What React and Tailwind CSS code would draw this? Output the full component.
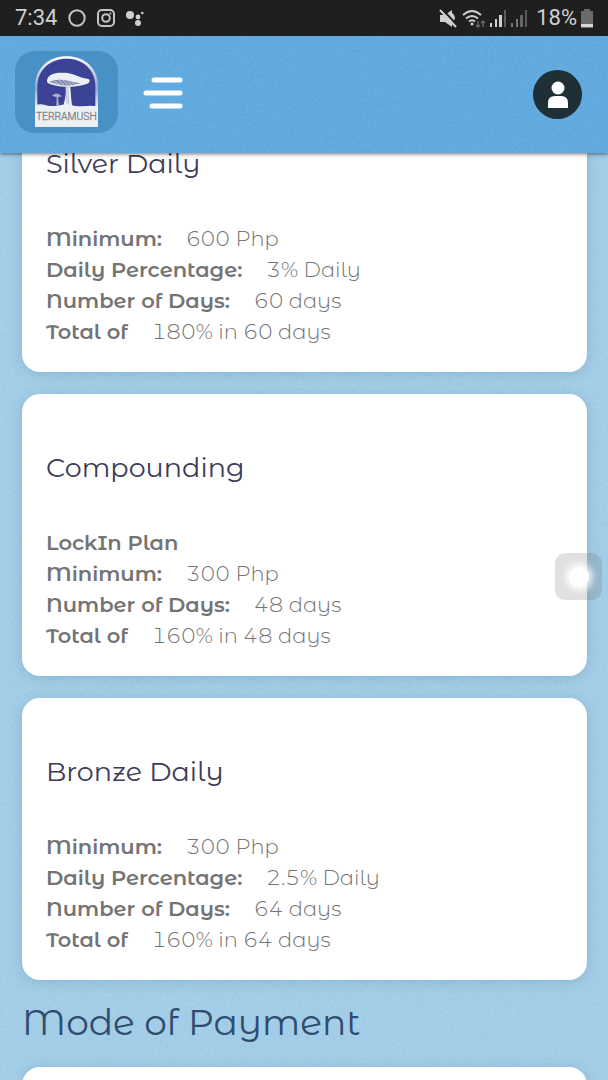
const plans = [
  {
    name: "Silver Daily",
    rows: [
      ["Minimum:", "600 Php"],
      ["Daily Percentage:", "3% Daily"],
      ["Number of Days:", "60 days"],
      ["Total of", "180% in 60 days"],
    ],
  },
  {
    name: "Compounding",
    rows: [
      ["LockIn Plan", ""],
      ["Minimum:", "300 Php"],
      ["Number of Days:", "48 days"],
      ["Total of", "160% in 48 days"],
    ],
  },
  {
    name: "Bronze Daily",
    rows: [
      ["Minimum:", "300 Php"],
      ["Daily Percentage:", "2.5% Daily"],
      ["Number of Days:", "64 days"],
      ["Total of", "160% in 64 days"],
    ],
  },
];

function Grain() {
  return (
    <svg
      className="absolute inset-0 w-full h-full opacity-15 pointer-events-none"
      aria-hidden="true"
    >
      <filter id="grain">
        <feTurbulence type="fractalNoise" baseFrequency="0.35" numOctaves="3" />
        <feColorMatrix type="saturate" values="0" />
      </filter>
      <rect width="100%" height="100%" filter="url(#grain)" />
    </svg>
  );
}

function Signal({ active }) {
  return (
    <svg width="17" height="19" viewBox="0 0 17 19" aria-hidden="true">
      <rect x="0" y="14" width="2" height="4" fill={active > 0 ? "#d0d0d0" : "#777"} />
      <rect x="5" y="10" width="2" height="8" fill={active > 1 ? "#d0d0d0" : "#777"} />
      <rect x="9" y="6" width="3" height="12" fill={active > 2 ? "#d0d0d0" : "#666"} />
      <rect x="14" y="1" width="2" height="17" fill="#5c5c5c" />
    </svg>
  );
}

function StatusBar() {
  return (
    <div className="relative z-20 flex items-center justify-between h-9 shrink-0 bg-[#1f1f1f] px-[15px] font-['Roboto',sans-serif] text-[22px] leading-9 text-[#d0d0d0]">
      <div className="flex items-center gap-[11px]">
        <span>7:34</span>
        <svg width="18" height="18" viewBox="0 0 18 18" fill="none" stroke="#c4c4c4" strokeWidth="2" aria-hidden="true">
          <circle cx="9" cy="9" r="7.7" />
        </svg>
        <svg width="18" height="18" viewBox="0 0 18 18" fill="none" stroke="#c4c4c4" strokeWidth="2" aria-hidden="true">
          <rect x="1" y="1" width="16" height="16" rx="4" />
          <circle cx="9" cy="9" r="3.8" />
          <circle cx="13.4" cy="4.6" r="1" fill="#c4c4c4" stroke="none" />
        </svg>
        <svg width="18" height="18" viewBox="0 0 18 18" fill="#cfcfcf" aria-hidden="true">
          <circle cx="4" cy="6" r="4" />
          <circle cx="12" cy="8" r="2.4" />
          <circle cx="12" cy="14" r="3" />
          <circle cx="16.3" cy="4" r="1.3" />
        </svg>
      </div>
      <div className="flex items-center gap-1">
        <svg width="19" height="19" viewBox="0 0 19 19" aria-hidden="true">
          <path d="M1 6h5l7-5v17l-7-5H1z" fill="#d0d0d0" />
          <path d="M13 4q3 2 3 6l-3 3z" fill="#d0d0d0" />
          <path d="M3 0l16 17" stroke="#1f1f1f" strokeWidth="2" />
          <path d="M1 1l16 17" stroke="#d0d0d0" strokeWidth="2" />
        </svg>
        <svg width="24" height="19" viewBox="0 0 24 19" fill="none" stroke="#d0d0d0" strokeWidth="2" aria-hidden="true">
          <path d="M1 6q9-8 18 0M4 9.500q6-5 12 0M7 12.500q3-2.500 6 0" />
          <circle cx="10" cy="15" r="1.500" fill="#d0d0d0" stroke="none" />
          <path d="M16 12v6m-2-2l2 2 2-2M21 18v-6m-2 2l2-2 2 2" stroke="#666" strokeWidth="1.500" />
        </svg>
        <Signal active={3} />
        <Signal active={0} />
        <span className="pl-1">18%</span>
        <svg width="12" height="19" viewBox="0 0 12 19" aria-hidden="true">
          <path d="M3 0h6v2h3v17H0V2h3z" fill="#6b6b6b" />
          <rect y="15" width="12" height="3" fill="#d8d8d8" />
        </svg>
      </div>
    </div>
  );
}

function Logo() {
  return (
    <svg width="63" height="71" viewBox="0 0 189 212" role="img" aria-label="Terramush">
      <defs>
        <linearGradient id="arch" x1="0" y1="0" x2="0" y2="1">
          <stop offset="0" stopColor="#ffffff" />
          <stop offset="0.45" stopColor="#8fa5cf" />
          <stop offset="0.75" stopColor="#f2f5f8" />
          <stop offset="1" stopColor="#e2e6e8" />
        </linearGradient>
      </defs>
      <path d="M0 212V92C0 32 44 0 95 0s94 32 94 92v120z" fill="url(#arch)" />
      <path d="M7 150V92C7 40 47 8 95 8s86 32 86 84v58z" fill="#3c4296" />
      <path d="M0 147q20-6 38 2 16 2 32-1l16-3q8-30 7-55l13 2q2 34 5 55l24 6q26-8 54-2v61H0z" fill="#edf0f3" />
      <path d="M36 72c4-18 24-24 52-22 30 1 42 15 70 18 13 3 4 16-8 17-28 8-64 9-90 3-10-4-26-5-24-16z" fill="#eef0f5" />
      <path d="M42 77q25-11 58-3 20 5 38 7-38 12-70 4-16-3-26-8z" fill="#858caf" />
      <path d="M47 79l18 6M58 75l18 12M71 72l16 15M84 72l14 15M98 75l12 11M112 79l9 6M43 75l16-5M58 68l25-3" stroke="#e5e7ef" strokeWidth="2" />
      <path d="M98 91l3 55M92 93l4 50" stroke="#9aa1bd" strokeWidth="2" />
      <path d="M51 119q14-14 30 1l-12 3 3 26h-8l1-26z" fill="#a8aecb" />
      <text x="94" y="191" textAnchor="middle" fontFamily="Roboto, sans-serif" fontWeight="300" fontSize="31" fill="#7e8489" stroke="#7e8489">
        TERRAMUSH
      </text>
    </svg>
  );
}

function Header() {
  return (
    <header className="relative z-10 flex items-center justify-between shrink-0 h-[117px] bg-[#5ba9e2] pl-[15px] pr-[26px] shadow-[0_1px_4px_rgba(0,0,0,0.55)]">
      <Grain />
      <div className="relative flex items-center gap-6 pb-[6px]">
        <a
          href="#home"
          className="flex items-center justify-center w-[103px] h-[82px] rounded-[20px] bg-[#4791c7]"
        >
          <Logo />
        </a>
        <button type="button" aria-label="Menu" className="block">
          <svg width="42" height="38" viewBox="0 0 42 38" stroke="#fff" strokeWidth="5" strokeLinecap="round">
            <path d="M12 7h26M4 20h34M10 33h28" />
          </svg>
        </button>
      </div>
      <button
        type="button"
        aria-label="Account"
        className="relative flex items-center justify-center w-[49px] h-[49px] rounded-full bg-[#1e2f36]"
      >
        <svg width="22" height="28" viewBox="0 0 22 28" fill="#fff">
          <circle cx="11" cy="7" r="6.500" />
          <path d="M1 27v-5q0-7 7-7h6q7 0 7 7v5z" />
        </svg>
      </button>
    </header>
  );
}

function PlanCard({ plan }) {
  return (
    <section className="rounded-[18px] bg-white px-6 pt-6 pb-[25px] shadow-[0_2px_12px_rgba(70,110,140,0.25)]">
      <h3 className="pt-[31px] pb-10 text-[27px] leading-[38px] text-[#3d3c58]">
        {plan.name}
      </h3>
      <dl className="text-[21px] leading-[31px] text-[#747474] tabular-nums">
        {plan.rows.map(([label, value]) => (
          <div key={label} className="flex gap-6">
            <dt className="font-semibold">{label}</dt>
            <dd className="font-light">{value}</dd>
          </div>
        ))}
      </dl>
    </section>
  );
}

export default function App() {
  return (
    <div className="relative flex flex-col h-screen overflow-hidden bg-[#a1cfea] font-['Montserrat_Alternates','Montserrat','Inter',sans-serif]">
      <Grain />
      <StatusBar />
      <Header />
      <main className="relative flex-1 min-h-0 pl-[22px] pr-[21px]">
        {/* the list is scrolled, so the first plan sits partly under the header */}
        <div className="flex flex-col gap-[22px] -mt-[63px]">
          {plans.map((plan) => (
            <PlanCard key={plan.name} plan={plan} />
          ))}
        </div>
        <h2 className="pt-[18px] pb-5 text-[36px] leading-[49px] text-[#304c70]">
          Mode of Payment
        </h2>
        <section className="h-40 rounded-[18px] bg-white shadow-[0_2px_12px_rgba(70,110,140,0.25)]" />
      </main>
      <button
        type="button"
        aria-label="Assistive menu"
        className="absolute z-20 right-[6px] top-[553px] flex items-center justify-center w-[47px] h-[47px] rounded-[10px] bg-[#646464]/20"
      >
        <span className="w-5 h-5 rounded-full bg-white shadow-[0_0_6px_4px_rgba(255,255,255,0.8)]" />
      </button>
    </div>
  );
}
